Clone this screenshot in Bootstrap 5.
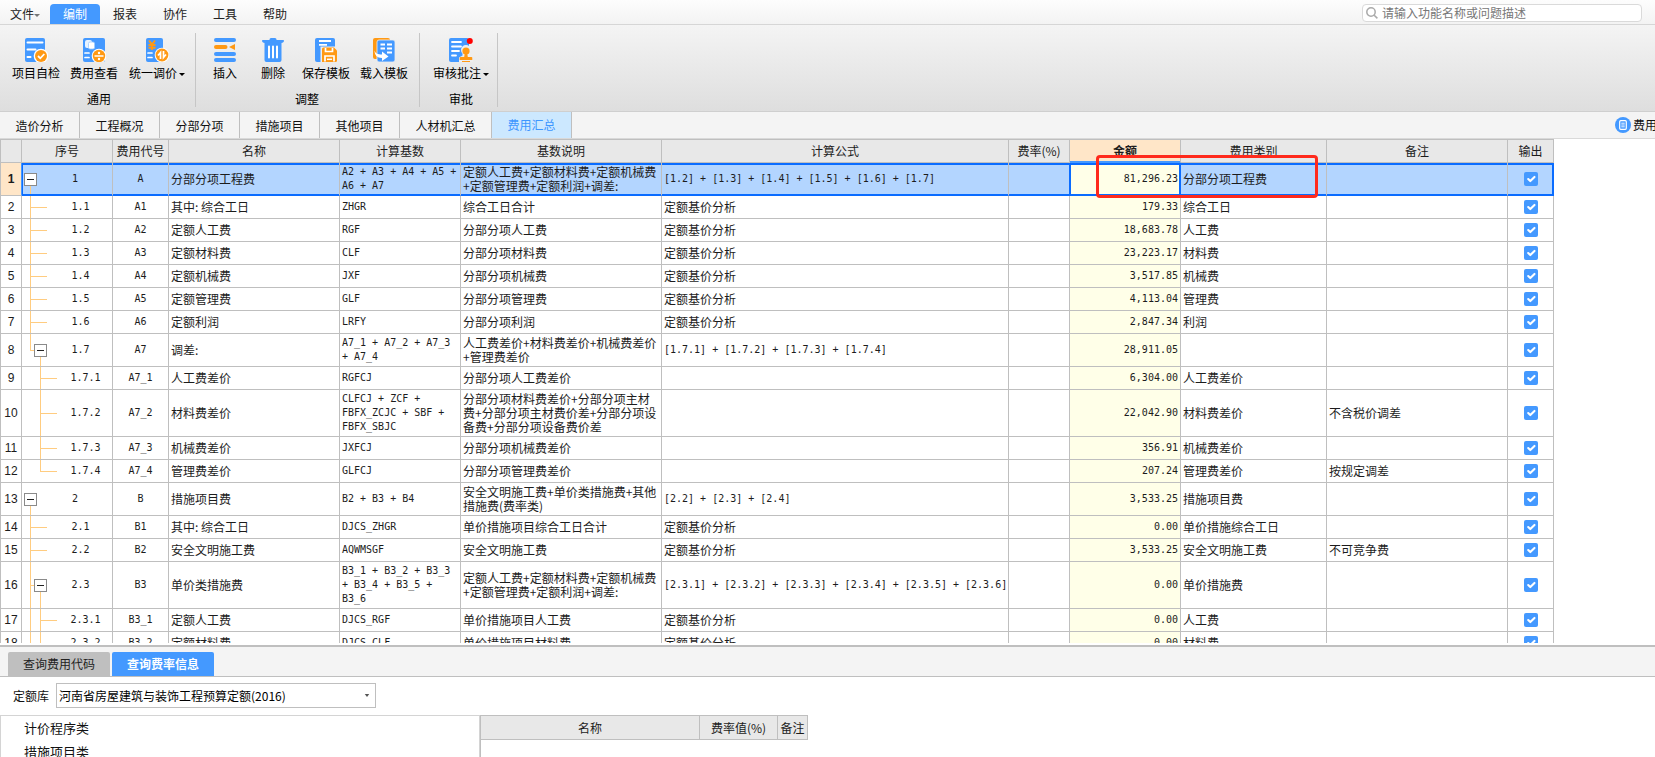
<!DOCTYPE html>
<html lang="zh-CN">
<head>
<meta charset="utf-8">
<meta name="viewport" content="width=device-width, initial-scale=1">
<title>费用汇总</title>
<link rel="stylesheet" href="https://cdn.jsdelivr.net/npm/bootstrap@5.3.0/dist/css/bootstrap.min.css">
<style>
  :root { --line: #bfbfbf; --blue: #4499ff; --sel: #0a6cff; --guide: #ffcc80; }
  body { font: 12px/16px "Noto Sans CJK SC", sans-serif; color: #111; background: #fff; }
  button, input, select { font: inherit; }
  a { color: inherit; text-decoration: none; }

  /* menu bar */
  .menu-bar { height: 25px; background: linear-gradient(#fdfdfd, #f3f3f3); border-bottom: 1px solid #d6d6d6; }
  .menu-bar .nav-link { width: 50px; padding: 2px 0; line-height: 16px; color: #222; text-align: center; border-radius: 4px 4px 0 0; }
  .menu-bar .nav-link.active { background: var(--blue); color: #fff; }
  .caret { display: inline-block; border: 3px solid transparent; border-top-color: currentColor; border-bottom: 0; vertical-align: 2px; margin-left: 2px; }
  .menu-bar .caret { color: #777; margin-left: 0; }
  .search-box { width: 280px; height: 18px; margin-right: 13px; background: #fff; border: 1px solid #dadada; border-radius: 4px; padding-left: 3px; gap: 4px; }
  .search-box input { border: 0; outline: 0; padding: 0; height: 16px; line-height: 16px; background: none; }
  .search-box input::placeholder { color: #777; }

  /* ribbon */
  .ribbon { background: linear-gradient(#f4f4f4, #dedede); border-bottom: 1px solid #cfcfcf; padding: 8px 0 4px; }
  .tool-group { border-right: 1px solid #c6c6c6; padding: 5px 4px 0 7px; }
  .tool-group.edit { padding: 5px 6px 0 5px; }
  .tool-group.audit { padding: 5px 2px 0 7px; }
  .tool-btn { width: 58px; padding: 0; border: 0; background: none; line-height: 16px; white-space: nowrap; color: #000; }
  .tool-btn.narrow { width: 48px; }
  .tool-btn.wide { width: 68px; }
  .tool-btn svg { display: block; margin: 0 auto 3px; }
  .group-name { text-align: center; margin-top: 10px; line-height: 16px; color: #000; }

  /* page tabs */
  .page-tabs { background: #f4f4f4; height: 27px; border-bottom: 1px solid #d9d9d9; overflow: hidden; }
  .page-tabs .tab-item { width: 80px; line-height: 28px; text-align: center; border-right: 1px solid var(--line); }
  .page-tabs .tab-item.long { width: 92px; }
  .page-tabs .tab-item.on { background: #cce8ff; color: #3d96ff; line-height: 26px; }
  .side-link { width: 40px; gap: 2px; white-space: nowrap; }

  /* sheet */
  .sheet { table-layout: fixed; border-collapse: separate; border-spacing: 0; width: 1554px; border-top: 1px solid var(--line); }
  .sheet th, .sheet td { border-right: 1px solid var(--line); border-bottom: 1px solid var(--line); padding: 2px; line-height: 14px; height: 23px; white-space: nowrap; font-weight: 400; vertical-align: middle; color: #1c1c1c; }
  .sheet th:first-child { border-left: 1px solid var(--line); }
  .sheet thead th { background: #e8e8e8; text-align: center; }
  .sheet tbody th { background: #fff; text-align: center; padding: 2px 0; font-family: "Liberation Sans", sans-serif; }
  .mono { font: 10px/14px "DejaVu Sans Mono", "Noto Sans CJK SC", monospace; }
  .sheet .amt { background: #ffffe8; text-align: right; }
  .sheet thead .amt-head { background: #ffe6c8; font-weight: 700; box-shadow: inset 0 -1px var(--blue); border-bottom-color: var(--blue); }
  .sheet .picked > td { background-color: #b3d5ff; border-bottom-color: var(--sel); box-shadow: inset 0 2px var(--sel), inset 0 -1px var(--sel); }
  .sheet .picked > th { background: #ffe6c8; font-weight: 700; border-right-color: var(--blue); }
  .sheet .picked > td.no { box-shadow: inset 1px 2px var(--sel), inset 0 -1px var(--sel); }
  .sheet .picked > td.rate { border-right-color: var(--sel); }
  .sheet .picked > td.amt { background: #ffffe8; border-right-color: var(--sel); box-shadow: inset 1px 2px var(--sel), inset -1px -1px var(--sel); position: relative; }
  .sheet .picked > td:last-child { border-right-color: var(--sel); box-shadow: inset 0 2px var(--sel), inset -1px -1px var(--sel); }
  .sheet input { width: 14px; height: 14px; margin: 0; display: block; border-radius: 2px; border: 0; }
  .sheet .form-check-input[type=checkbox] { border-radius: 2px; }
  .sheet input:checked { background-color: var(--blue); }
  .callout { position: absolute; left: 26px; top: -8px; width: 222px; height: 43px; border: 3px solid #ff2a1c; border-radius: 4px; z-index: 2; pointer-events: none; }

  /* outline column: guides are painted as thin background strips */
  .no { --g: linear-gradient(var(--guide), var(--guide)); text-align: center; position: relative; background-repeat: no-repeat; }
  .sheet .no.d0 { padding-left: 18px; }
  .sheet .no.d1 { padding-left: 29px; }
  .sheet .no.d2 { padding-left: 39px; }
  .d0 { background-image: var(--g); background-position: 8px 100%; background-size: 1px 50%; }
  .d1 { background-image: var(--g), var(--g); background-position: 8px 0, 8px 50%; background-size: 1px 100%, 17px 1px; }
  .d1.parent { background-image: var(--g), var(--g), var(--g); background-position: 8px 0, 8px 50%, 18px 100%; background-size: 1px 100%, 8px 1px, 1px 50%; }
  .d1.parent.last { background-size: 1px 50%, 8px 1px, 1px 50%; }
  .d2 { background-image: var(--g), var(--g); background-position: 18px 0, 18px 50%; background-size: 1px 100%, 17px 1px; }
  .d2.last { background-size: 1px 50%, 17px 1px; }
  .d2.under { background-image: var(--g), var(--g), var(--g); background-position: 18px 0, 18px 50%, 8px 0; background-size: 1px 100%, 17px 1px, 1px 100%; }
  .fold { position: absolute; left: 2px; top: calc(50% - 6px); width: 13px; height: 13px; padding: 0; border: 1px solid #8a8a8a; background: linear-gradient(#222, #222) center / 7px 1px no-repeat #fff; }
  .d1 .fold { left: 12px; }

  /* lower pane */
  .lower { border-top: 2px solid var(--line); height: 112px; margin-top: 2px; }
  .lower-tabs { background: #f4f4f4; border-bottom: 1px solid var(--line); padding: 5px 8px 0; gap: 2px; }
  .lower-tabs button { width: 102px; height: 24px; border: 0; padding: 0; background: #bfbfbf; color: #222; border-radius: 2px 2px 0 0; }
  .lower-tabs button.on { background: var(--blue); color: #fff; font-weight: 700; }
  .pick-row { padding: 6px 13px 7px; gap: 7px; }
  .pick-row select { width: 320px; height: 25px; padding: 0 2px; border: 1px solid var(--line); border-radius: 0; color: #000; appearance: none;
    background: #fff url("data:image/svg+xml,%3Csvg xmlns='http://www.w3.org/2000/svg' viewBox='0 0 6 4'%3E%3Cpath d='M0 0h6L3 4z' fill='%23555'/%3E%3C/svg%3E") right 5px center / 6px 3px no-repeat; }
  .tree-list { width: 480px; border: solid #d4d4d4; border-width: 1px 1px 0; font-size: 13px; padding: 0 0 0 23px; margin: 0; list-style: none; }
  .tree-list li { line-height: 24px; }
  .rates-pane { border-left: 1px solid var(--line); }
  .rates { width: 327px; }
  .rates th { height: 24px; }
  .sheet.rates th { height: 24px; }
</style>
</head>
<body class="vh-100 d-flex flex-column overflow-hidden">

<header class="menu-bar d-flex justify-content-between align-items-start flex-shrink-0">
  <nav class="nav pt-1">
    <a class="nav-link" href="#">文件<span class="caret"></span></a>
    <a class="nav-link active" href="#">编制</a>
    <a class="nav-link" href="#">报表</a>
    <a class="nav-link" href="#">协作</a>
    <a class="nav-link" href="#">工具</a>
    <a class="nav-link" href="#">帮助</a>
  </nav>
  <label class="search-box d-flex align-items-center mt-1">
    <svg width="12" height="12" viewBox="0 0 12 12" fill="none" stroke="#aaa" stroke-width="1.5"><circle cx="5" cy="5" r="4.2"/><path d="M8.2 8.2 11.4 11.4"/></svg>
    <input class="flex-grow-1" type="text" placeholder="请输入功能名称或问题描述" aria-label="搜索">
  </label>
</header>

<section class="ribbon d-flex flex-shrink-0">
  <div class="tool-group">
    <div class="d-flex">
      <button class="tool-btn" type="button">
        <svg width="24" height="24" viewBox="0 0 24 24"><rect x="1" width="20" height="24" rx="2" fill="#4499ff"/><path d="M3.500 4.500h15M3.500 11.500h8M3.500 19h3" stroke="#fff" stroke-width="2" stroke-linecap="round"/><circle cx="17" cy="18" r="7.300" fill="#fff"/><circle cx="17" cy="18" r="6" fill="#ff9914"/><path d="m14 18 2.300 2.300 4-4.300" fill="none" stroke="#fff" stroke-width="1.800"/></svg>
        项目自检</button>
      <button class="tool-btn" type="button">
        <svg width="24" height="24" viewBox="0 0 24 24"><rect x="1" width="22" height="24" rx="2" fill="#4499ff"/><rect x="3" y="2" width="7" height="8" rx="2" fill="#e8f3ff"/><rect x="6.500" y="4" width="6" height="7" rx="1.500" fill="#fff" stroke="#9dcbff" stroke-width=".8"/><path d="M3 15h4M3 19.500h4" stroke="#fff" stroke-width="1.700" stroke-linecap="round"/><circle cx="17" cy="18" r="7.300" fill="#fff"/><circle cx="17" cy="18" r="6.200" fill="#ff9914"/><path d="M12.500 18h9" stroke="#fff" stroke-width="1.500"/><circle cx="17" cy="15" r="1.200" fill="#fff"/><circle cx="17" cy="21" r="1.200" fill="#fff"/></svg>
        费用查看</button>
      <button class="tool-btn wide" type="button">
        <svg width="24" height="24" viewBox="0 0 24 24"><rect x="1" width="17" height="24" rx="2" fill="#4499ff"/><path d="M4 2.500l3 4 3-4M7 6.500V12M3.500 7h7M3.500 9.700h7" fill="none" stroke="#ff9914" stroke-width="1.900"/><path d="M3 15h4M3 19.500h4" stroke="#fff" stroke-width="1.700" stroke-linecap="round"/><circle cx="17" cy="17" r="7.300" fill="#fff"/><circle cx="17" cy="17" r="6.400" fill="#ff9914"/><path d="M13 17.500l2.500-3v6.500M21 16.500l-2.500 3V13" fill="none" stroke="#fff" stroke-width="1.700"/></svg>
        统一调价<span class="caret"></span></button>
    </div>
    <div class="group-name">通用</div>
  </div>
  <div class="tool-group edit">
    <div class="d-flex">
      <button class="tool-btn narrow" type="button">
        <svg width="24" height="24" viewBox="0 0 24 24"><path d="M3 2h18M3 16h18M3 22h18" stroke="#4499ff" stroke-width="4" stroke-linecap="round"/><path d="M3 9h9.500" stroke="#ff9914" stroke-width="4" stroke-linecap="round"/><path d="M22 6v6l-6-3z" fill="#ff9914"/></svg>
        插入</button>
      <button class="tool-btn narrow" type="button">
        <svg width="24" height="24" viewBox="0 0 24 24"><path d="M8.500 1.500A1.500 1.500 0 0 1 10 0h4a1.500 1.500 0 0 1 1.500 1.500V2H22a1 1 0 0 1 1 1.200A3 3 0 0 1 20.500 5v17a2 2 0 0 1-2 2h-13a2 2 0 0 1-2-2V5A3 3 0 0 1 1 3.200 1 1 0 0 1 2 2h6.500z" fill="#4499ff"/><path d="M8 8.500v11M12 8.500v11M16 8.500v11" stroke="#fff" stroke-width="2" stroke-linecap="round"/></svg>
        删除</button>
      <button class="tool-btn" type="button">
        <svg width="24" height="24" viewBox="0 0 24 24"><rect x="1" width="20" height="24" rx="2" fill="#4499ff"/><path d="M5 3h12M5 6.800h8" stroke="#fff" stroke-width="1.800"/><rect x="6.500" y="8.500" width="17" height="16" fill="#eee"/><path d="M8 11a1.500 1.500 0 0 1 1.500-1.500H20l3 3V22.500a1.500 1.500 0 0 1-1.500 1.500H8z" fill="#ff9914"/><path d="M11.500 10v3.500h7V10M11 23.500v-5.500h9v5.500" fill="none" stroke="#fff" stroke-width="1.700"/><path d="M13 21.300h5" stroke="#fff" stroke-width="1.500"/></svg>
        保存模板</button>
      <button class="tool-btn" type="button">
        <svg width="24" height="24" viewBox="0 0 24 24"><rect x="1" width="17" height="21" rx="2" fill="#ff9914"/><rect x="5" y="2" width="18" height="22" rx="2" fill="#4499ff" stroke="#eee" stroke-width=".8"/><path d="M8.500 6.500h4.500M15 6.500h5M8.500 10.500h4.500M15 10.500h5M15 14.500h5" stroke="#fff" stroke-width="2"/><path d="M2.500 12.500c1 3 3 4 7.500 4v-3l6.500 5-6.500 4.500v-3c-5 0-7.500-3-7.500-7.500z" fill="#fff"/></svg>
        载入模板</button>
    </div>
    <div class="group-name">调整</div>
  </div>
  <div class="tool-group audit">
    <div class="d-flex">
      <button class="tool-btn wide" type="button">
        <svg width="26" height="24" viewBox="0 0 26 24"><rect x="1" width="20" height="24" rx="2" fill="#4499ff"/><path d="M4 4h9M4 8.500h9M4 13h7M4 17.500h4" stroke="#fff" stroke-width="1.800" stroke-linecap="round"/><path d="M11 24.500v-5l3.500-2v-2a5 5 0 1 1 7 0v2l3.500 2v5z" fill="#eee"/><circle cx="18" cy="13" r="3.600" fill="#ff9914"/><path d="M16.800 15h2.400l.6 4h3.700a.8.800 0 0 1 .8.800V22H11.700v-2.200a.8.800 0 0 1 .8-.8h3.700zM14 23h8v1h-8z" fill="#ff9914"/><circle cx="21.800" cy="3" r="3" fill="#f00"/></svg>
        审核批注<span class="caret"></span></button>
    </div>
    <div class="group-name">审批</div>
  </div>
</section>

<nav class="page-tabs d-flex flex-shrink-0">
  <a class="tab-item" href="#">造价分析</a>
  <a class="tab-item" href="#">工程概况</a>
  <a class="tab-item" href="#">分部分项</a>
  <a class="tab-item" href="#">措施项目</a>
  <a class="tab-item" href="#">其他项目</a>
  <a class="tab-item long" href="#">人材机汇总</a>
  <a class="tab-item on" href="#">费用汇总</a>
  <a class="side-link d-flex align-items-center ms-auto" href="#">
    <svg class="flex-shrink-0" width="16" height="16" viewBox="0 0 16 16"><circle cx="8" cy="8" r="8" fill="#4499ff"/><rect x="4.700" y="3.700" width="6.600" height="8.600" rx="1" fill="none" stroke="#fff" stroke-width="1.200"/><path d="M6.300 6.200h3.400M6.300 8h3.400M6.300 9.800h3.400" stroke="#fff" stroke-width=".9"/></svg>
    <span>费用</span></a>
</nav>

<main class="flex-grow-1 overflow-hidden" style="min-height:0">
<table class="sheet">
  <colgroup><col style="width:22px"><col style="width:91px"><col style="width:56px"><col style="width:171px"><col style="width:121px"><col style="width:201px"><col style="width:347px"><col style="width:61px"><col style="width:111px"><col style="width:146px"><col style="width:181px"><col style="width:46px"></colgroup>
  <thead>
    <tr><th></th><th>序号</th><th>费用代号</th><th>名称</th><th>计算基数</th><th>基数说明</th><th>计算公式</th><th>费率(%)</th><th class="amt-head">金额</th><th>费用类别</th><th>备注</th><th>输出</th></tr>
  </thead>
  <tbody>
    <tr class="picked"><th>1</th><td class="no d0 mono"><button class="fold" type="button" aria-label="折叠"></button>1</td><td class="mono text-center">A</td><td>分部分项工程费</td><td class="mono">A2 + A3 + A4 + A5 +<br>A6 + A7</td><td>定额人工费+定额材料费+定额机械费<br>+定额管理费+定额利润+调差:</td><td class="mono">[1.2] + [1.3] + [1.4] + [1.5] + [1.6] + [1.7]</td><td class="rate"></td><td class="amt mono">81,296.23<span class="callout"></span></td><td>分部分项工程费</td><td></td><td><input class="form-check-input mx-auto" type="checkbox" aria-label="输出" checked></td></tr>
    <tr><th>2</th><td class="no d1 mono">1.1</td><td class="mono text-center">A1</td><td>其中: 综合工日</td><td class="mono">ZHGR</td><td>综合工日合计</td><td>定额基价分析</td><td></td><td class="amt mono">179.33</td><td>综合工日</td><td></td><td><input class="form-check-input mx-auto" type="checkbox" aria-label="输出" checked></td></tr>
    <tr><th>3</th><td class="no d1 mono">1.2</td><td class="mono text-center">A2</td><td>定额人工费</td><td class="mono">RGF</td><td>分部分项人工费</td><td>定额基价分析</td><td></td><td class="amt mono">18,683.78</td><td>人工费</td><td></td><td><input class="form-check-input mx-auto" type="checkbox" aria-label="输出" checked></td></tr>
    <tr><th>4</th><td class="no d1 mono">1.3</td><td class="mono text-center">A3</td><td>定额材料费</td><td class="mono">CLF</td><td>分部分项材料费</td><td>定额基价分析</td><td></td><td class="amt mono">23,223.17</td><td>材料费</td><td></td><td><input class="form-check-input mx-auto" type="checkbox" aria-label="输出" checked></td></tr>
    <tr><th>5</th><td class="no d1 mono">1.4</td><td class="mono text-center">A4</td><td>定额机械费</td><td class="mono">JXF</td><td>分部分项机械费</td><td>定额基价分析</td><td></td><td class="amt mono">3,517.85</td><td>机械费</td><td></td><td><input class="form-check-input mx-auto" type="checkbox" aria-label="输出" checked></td></tr>
    <tr><th>6</th><td class="no d1 mono">1.5</td><td class="mono text-center">A5</td><td>定额管理费</td><td class="mono">GLF</td><td>分部分项管理费</td><td>定额基价分析</td><td></td><td class="amt mono">4,113.04</td><td>管理费</td><td></td><td><input class="form-check-input mx-auto" type="checkbox" aria-label="输出" checked></td></tr>
    <tr><th>7</th><td class="no d1 mono">1.6</td><td class="mono text-center">A6</td><td>定额利润</td><td class="mono">LRFY</td><td>分部分项利润</td><td>定额基价分析</td><td></td><td class="amt mono">2,847.34</td><td>利润</td><td></td><td><input class="form-check-input mx-auto" type="checkbox" aria-label="输出" checked></td></tr>
    <tr><th>8</th><td class="no d1 parent last mono"><button class="fold" type="button" aria-label="折叠"></button>1.7</td><td class="mono text-center">A7</td><td>调差:</td><td class="mono">A7_1 + A7_2 + A7_3<br>+ A7_4</td><td>人工费差价+材料费差价+机械费差价<br>+管理费差价</td><td class="mono">[1.7.1] + [1.7.2] + [1.7.3] + [1.7.4]</td><td></td><td class="amt mono">28,911.05</td><td></td><td></td><td><input class="form-check-input mx-auto" type="checkbox" aria-label="输出" checked></td></tr>
    <tr><th>9</th><td class="no d2 mono">1.7.1</td><td class="mono text-center">A7_1</td><td>人工费差价</td><td class="mono">RGFCJ</td><td>分部分项人工费差价</td><td></td><td></td><td class="amt mono">6,304.00</td><td>人工费差价</td><td></td><td><input class="form-check-input mx-auto" type="checkbox" aria-label="输出" checked></td></tr>
    <tr><th>10</th><td class="no d2 mono">1.7.2</td><td class="mono text-center">A7_2</td><td>材料费差价</td><td class="mono">CLFCJ + ZCF +<br>FBFX_ZCJC + SBF +<br>FBFX_SBJC</td><td>分部分项材料费差价+分部分项主材<br>费+分部分项主材费价差+分部分项设<br>备费+分部分项设备费价差</td><td></td><td></td><td class="amt mono">22,042.90</td><td>材料费差价</td><td>不含税价调差</td><td><input class="form-check-input mx-auto" type="checkbox" aria-label="输出" checked></td></tr>
    <tr><th>11</th><td class="no d2 mono">1.7.3</td><td class="mono text-center">A7_3</td><td>机械费差价</td><td class="mono">JXFCJ</td><td>分部分项机械费差价</td><td></td><td></td><td class="amt mono">356.91</td><td>机械费差价</td><td></td><td><input class="form-check-input mx-auto" type="checkbox" aria-label="输出" checked></td></tr>
    <tr><th>12</th><td class="no d2 last mono">1.7.4</td><td class="mono text-center">A7_4</td><td>管理费差价</td><td class="mono">GLFCJ</td><td>分部分项管理费差价</td><td></td><td></td><td class="amt mono">207.24</td><td>管理费差价</td><td>按规定调差</td><td><input class="form-check-input mx-auto" type="checkbox" aria-label="输出" checked></td></tr>
    <tr><th>13</th><td class="no d0 mono"><button class="fold" type="button" aria-label="折叠"></button>2</td><td class="mono text-center">B</td><td>措施项目费</td><td class="mono">B2 + B3 + B4</td><td>安全文明施工费+单价类措施费+其他<br>措施费(费率类)</td><td class="mono">[2.2] + [2.3] + [2.4]</td><td></td><td class="amt mono">3,533.25</td><td>措施项目费</td><td></td><td><input class="form-check-input mx-auto" type="checkbox" aria-label="输出" checked></td></tr>
    <tr><th>14</th><td class="no d1 mono">2.1</td><td class="mono text-center">B1</td><td>其中: 综合工日</td><td class="mono">DJCS_ZHGR</td><td>单价措施项目综合工日合计</td><td>定额基价分析</td><td></td><td class="amt mono">0.00</td><td>单价措施综合工日</td><td></td><td><input class="form-check-input mx-auto" type="checkbox" aria-label="输出" checked></td></tr>
    <tr><th>15</th><td class="no d1 mono">2.2</td><td class="mono text-center">B2</td><td>安全文明施工费</td><td class="mono">AQWMSGF</td><td>安全文明施工费</td><td>定额基价分析</td><td></td><td class="amt mono">3,533.25</td><td>安全文明施工费</td><td>不可竞争费</td><td><input class="form-check-input mx-auto" type="checkbox" aria-label="输出" checked></td></tr>
    <tr><th>16</th><td class="no d1 parent mono"><button class="fold" type="button" aria-label="折叠"></button>2.3</td><td class="mono text-center">B3</td><td>单价类措施费</td><td class="mono">B3_1 + B3_2 + B3_3<br>+ B3_4 + B3_5 +<br>B3_6</td><td>定额人工费+定额材料费+定额机械费<br>+定额管理费+定额利润+调差:</td><td class="mono">[2.3.1] + [2.3.2] + [2.3.3] + [2.3.4] + [2.3.5] + [2.3.6]</td><td></td><td class="amt mono">0.00</td><td>单价措施费</td><td></td><td><input class="form-check-input mx-auto" type="checkbox" aria-label="输出" checked></td></tr>
    <tr><th>17</th><td class="no d2 under mono">2.3.1</td><td class="mono text-center">B3_1</td><td>定额人工费</td><td class="mono">DJCS_RGF</td><td>单价措施项目人工费</td><td>定额基价分析</td><td></td><td class="amt mono">0.00</td><td>人工费</td><td></td><td><input class="form-check-input mx-auto" type="checkbox" aria-label="输出" checked></td></tr>
    <tr><th>18</th><td class="no d2 under mono">2.3.2</td><td class="mono text-center">B3_2</td><td>定额材料费</td><td class="mono">DJCS_CLF</td><td>单价措施项目材料费</td><td>定额基价分析</td><td></td><td class="amt mono">0.00</td><td>材料费</td><td></td><td><input class="form-check-input mx-auto" type="checkbox" aria-label="输出" checked></td></tr>
  </tbody>
</table>
</main>

<section class="lower d-flex flex-column flex-shrink-0 overflow-hidden">
  <div class="lower-tabs d-flex flex-shrink-0">
    <button type="button">查询费用代码</button>
    <button class="on" type="button">查询费率信息</button>
  </div>
  <div class="pick-row d-flex align-items-center flex-shrink-0">
    <label for="quota">定额库</label>
    <select id="quota"><option>河南省房屋建筑与装饰工程预算定额(2016)</option></select>
  </div>
  <div class="d-flex flex-grow-1">
    <ul class="tree-list flex-shrink-0">
      <li>计价程序类</li>
      <li>措施项目类</li>
    </ul>
    <div class="rates-pane flex-grow-1">
      <table class="sheet rates">
        <colgroup><col style="width:219px"><col style="width:78px"><col style="width:30px"></colgroup>
        <thead><tr><th class="border-start-0">名称</th><th>费率值(%)</th><th>备注</th></tr></thead>
      </table>
    </div>
  </div>
</section>

<script src="https://cdn.jsdelivr.net/npm/bootstrap@5.3.0/dist/js/bootstrap.bundle.min.js"></script>
</body>
</html>
